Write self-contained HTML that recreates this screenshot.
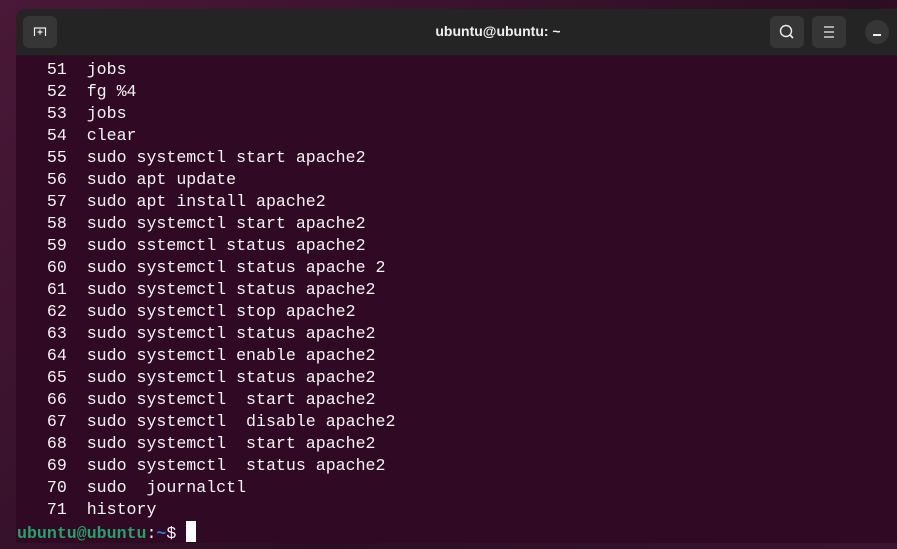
<!DOCTYPE html>
<html><head><style>
body{margin:0;width:897px;height:549px;overflow:hidden;background:linear-gradient(135deg,#4a1838,#2c0e24 60%,#3a1430);font-family:"Liberation Mono",monospace;}
.win{position:absolute;left:16px;top:9px;width:900px;height:534px;border-radius:10px 0 0 0;overflow:hidden;background:#300a24;}
.hdr{height:46px;background:#242424;position:relative;border-bottom:1px solid #1b1b1b;}
.btn{position:absolute;top:7px;width:34px;height:32px;background:#363636;border-radius:6px;}
.title{position:absolute;left:0;right:0;top:14px;text-align:center;font:bold 14px "Liberation Sans",sans-serif;color:#f0f0f0;padding-left:64px;}
pre{margin:0;padding:3px 0 0 1px;font-size:16.6px;line-height:22px;color:#f4f4f4;font-family:"Liberation Mono",monospace;}
.g{color:#26a269;font-weight:bold}.b{color:#2a7bde;font-weight:bold}
.cur{display:inline-block;width:10px;height:21px;background:#fff;vertical-align:-4px}
</style></head><body>
<div class="win">
<div class="hdr">
<div class="btn" style="left:7px"><svg width="34" height="32"><path d="M11.5 20v-8h11v8M17 13.5v5M14.5 16h5" stroke="#eee" stroke-width="1.2" fill="none"/></svg></div>
<div class="title">ubuntu@ubuntu: ~</div>
<div class="btn" style="left:754px"><svg width="34" height="32"><circle cx="16" cy="15" r="5.5" stroke="#eee" stroke-width="1.4" fill="none"/><path d="M20 19l3 3" stroke="#eee" stroke-width="1.6"/></svg></div>
<div class="btn" style="left:796px"><svg width="34" height="32"><path d="M12 11h10M12 16h10M12 21h10" stroke="#eee" stroke-width="1.2"/></svg></div>
<div style="position:absolute;left:849px;top:11px;width:24px;height:24px;border-radius:50%;background:#363636"><div style="position:absolute;left:8px;top:14px;width:8px;height:1.5px;background:#eee"></div></div>
</div>
<pre>   51  jobs
   52  fg %4
   53  jobs
   54  clear
   55  sudo systemctl start apache2
   56  sudo apt update
   57  sudo apt install apache2
   58  sudo systemctl start apache2
   59  sudo sstemctl status apache2
   60  sudo systemctl status apache 2
   61  sudo systemctl status apache2
   62  sudo systemctl stop apache2
   63  sudo systemctl status apache2
   64  sudo systemctl enable apache2
   65  sudo systemctl status apache2
   66  sudo systemctl  start apache2
   67  sudo systemctl  disable apache2
   68  sudo systemctl  start apache2
   69  sudo systemctl  status apache2
   70  sudo  journalctl
   71  history
<span class="g">ubuntu@ubuntu</span>:<span class="b">~</span>$ <span class="cur"></span></pre>
</div>
</body></html>
